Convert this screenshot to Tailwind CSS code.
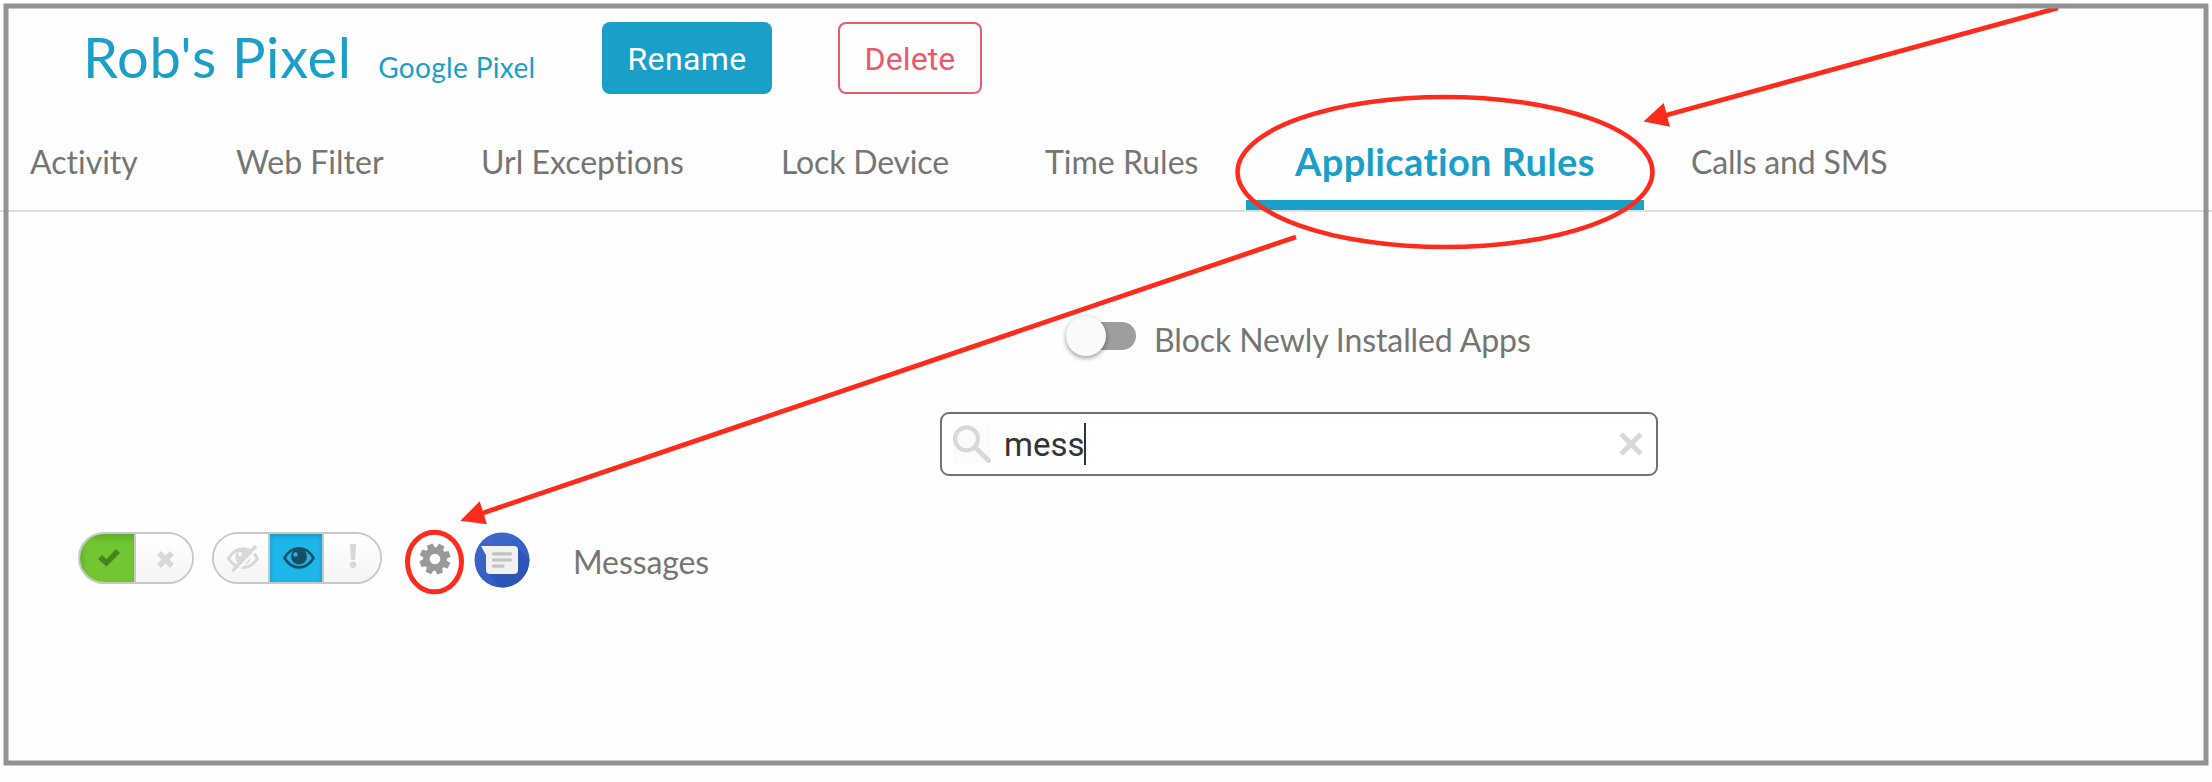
<!DOCTYPE html>
<html lang="en">
<head>
<meta charset="utf-8">
<title>Rob's Pixel - Application Rules</title>
<script src="https://cdn.jsdelivr.net/npm/@tailwindcss/browser@4"></script>
</head>
<body class="relative h-[782px] w-[2212px] overflow-hidden bg-[#fefefe] font-[Lato,sans-serif] text-[32px] text-[#757575] [font-variant-ligatures:none]">
<header class="flex h-[94px] items-end whitespace-nowrap pl-[83px] text-[#1a9fc9]">
  <div class="flex h-[72px] w-[519px] items-baseline">
    <h1 class="text-[56px] leading-[69px] tracking-[0.7px]">Rob's Pixel</h1>
    <span class="ml-[26.5px] text-[28px] leading-none tracking-[0.33px]">Google Pixel</span>
  </div>
  <button class="h-[72px] w-[170px] rounded-lg bg-[#1a9fc9] pt-[2px] font-[Roboto,sans-serif] tracking-[0.4px] text-white">Rename</button>
  <button class="ml-[66px] h-[72px] w-[144px] rounded-lg border-2 border-[#ea5a6f] pt-[2px] font-[Roboto,sans-serif] tracking-[0.1px] text-[#ea5a6f]">Delete</button>
</header>
<nav class="flex h-[118px] border-b-2 border-[#dedede] whitespace-nowrap">
  <ul class="-ml-[18px] flex h-[116px] leading-[40px]">
    <li class="w-[206px] pt-[48px] pl-12">Activity</li>
    <li class="w-[245px] pt-[48px] pl-12">Web Filter</li>
    <li class="w-[300px] pt-[48px] pl-12">Url Exceptions</li>
    <li class="w-[263px] pt-[48px] pl-12 tracking-[-0.18px]">Lock Device</li>
    <li class="w-[250px] pt-[48px] pl-[49px]">Time Rules</li>
    <li class="w-[398px] border-b-10 border-[#1a9fc9] pt-[47px] pl-[49px] text-[38px] font-bold tracking-[0.35px] text-[#1a9fc9]">Application Rules</li>
    <li class="pt-[48px] pl-[47px] tracking-[-0.18px]">Calls and SMS</li>
  </ul>
</nav>
<main>
  <div class="mt-[104px] flex h-[40px] items-center pl-[1066px]">
    <div class="flex h-[40px] w-[70px] items-center">
      <div class="z-10 size-[40px] shrink-0 rounded-full bg-[#fafafa] shadow-[0_2px_5px_rgba(0,0,0,0.4)]"></div>
      <div class="-ml-[38px] h-[28px] w-[68px] shrink-0 rounded-full bg-[#9e9e9e]"></div>
    </div>
    <span class="ml-[18px] pt-[8px] leading-[40px] tracking-[-0.1px]">Block Newly Installed Apps</span>
  </div>
  <div class="mt-[56px] ml-[940px] flex h-[64px] w-[718px] items-center rounded-[9px] border-2 border-[#75706b] bg-white pr-[13px] pl-[11px] font-[Roboto,sans-serif] text-[#333]">
    <svg class="size-[38px] bg-[#fbfbfb]" viewBox="0 0 38 38" fill="none" stroke="#d8d8d8"><circle cx="13.5" cy="13.8" r="11.5" stroke-width="4.2"/><path d="M22 22.300L35.500 35.500" stroke-width="5" stroke-linecap="round"/></svg>
    <span class="ml-[13px] w-[80px] pt-px text-[33px] leading-[48px]">mess</span>
    <span class="h-[42px] w-[2px] bg-[#333]"></span>
    <svg class="ml-auto size-[24px]" viewBox="0 0 24 24" stroke="#d8d8d8" stroke-width="5"><path d="M2 2L22 22M22 2L2 22"/></svg>
  </div>
  <div class="mt-[56px] flex h-[56px] items-start pl-[78px]">
    <div class="flex h-[52px] w-[116px] overflow-hidden rounded-full border-2 border-[#c8c8c8]">
      <div class="flex w-[56px] items-center justify-center border-r-2 border-[#c8c8c8] bg-[#71c631] shadow-[inset_2px_4px_6px_rgba(0,0,0,0.15)]">
        <svg class="ml-[3px] h-[18px] w-[22px]" viewBox="0 0 22 18"><path d="M0 10L4 6L8.5 10L18 0L22 4L8.5 17.5Z" fill="#458520"/></svg>
      </div>
      <div class="flex flex-1 items-center bg-linear-to-b from-white to-[#f5f5f5] pl-[21px]">
        <svg class="mt-[2px] size-[17px]" viewBox="0 0 17 17" stroke="#d8d8d8" stroke-width="5.5"><path d="M2 2L15 15M15 2L2 15"/></svg>
      </div>
    </div>
    <div class="ml-[18px] flex h-[52px] w-[170px] overflow-hidden rounded-full border-2 border-[#c8c8c8]">
      <div class="flex w-[56px] items-center border-r-2 border-[#c8c8c8] bg-linear-to-b from-white to-[#f5f5f5] pl-[13px]">
        <svg class="mt-[2px] h-[28px] w-[32px] shrink-0" viewBox="0 0 32 28" fill="none"><path d="M1.5 13.5C9 .5 23 .5 30.500 13.500C23 25.500 9 25.500 1.500 13.500Z" stroke="#d8d8d8" stroke-width="3"/><circle cx="16" cy="12" r="7.700" fill="#d8d8d8"/><circle cx="13" cy="9" r="2" fill="#fff"/><path d="M8 28L31 2" stroke="#fbfbfb" stroke-width="3"/><path d="M6.500 25L28 2" stroke="#d8d8d8" stroke-width="3.600" stroke-linecap="round"/></svg>
      </div>
      <div class="flex w-[54px] items-center border-r-2 border-[#c8c8c8] bg-[#1eb5e8] pl-[12px] shadow-[inset_0_2px_4px_rgba(0,0,0,0.18)]">
        <svg class="h-[28px] w-[34px] shrink-0" viewBox="0 0 34 28" fill="none"><path d="M2.500 14C10 1 24 1 31.500 14C24 26.500 10 26.500 2.500 14Z" stroke="#174e66" stroke-width="2.600"/><circle cx="17" cy="12.500" r="8" fill="#174e66"/><circle cx="13.500" cy="10.500" r="2.200" fill="#1eb5e8"/></svg>
      </div>
      <div class="flex flex-1 items-center bg-linear-to-b from-white to-[#f5f5f5] pl-[25px]">
        <svg class="-mt-[4px] h-[24px] w-[8px]" viewBox="0 0 8 24" fill="#d8d8d8"><path d="M.8 0H7.200L6 16H2Z"/><circle cx="4" cy="20.800" r="3.200"/></svg>
      </div>
    </div>
    <svg class="mt-[11px] ml-[37px] size-[32px]" viewBox="-16 -16 32 32" fill="#999"><g transform="rotate(3)"><path id="tooth" d="M-4-9L-3-15.500H3L4-9V9L3 15.500H-3L-4 9Z" transform="rotate(22.500)"/><use href="#tooth" transform="rotate(45)"/><use href="#tooth" transform="rotate(90)"/><use href="#tooth" transform="rotate(135)"/><circle r="11.800"/></g><circle r="5.300" fill="#fefefe"/></svg>
    <svg class="ml-[23px] size-[56px]" viewBox="0 0 56 56"><defs><linearGradient id="blue" x2=".6" y2="1"><stop stop-color="#4269cb"/><stop offset="1" stop-color="#2f5bc4"/></linearGradient><clipPath id="disc"><circle cx="28" cy="28" r="27.500"/></clipPath></defs><circle cx="28" cy="28" r="27.500" fill="url(#blue)"/><path clip-path="url(#disc)" d="M43 15L60 32V60H30L13 40Z" fill="#2b51ac" opacity=".65"/><path d="M7 14H40Q44 14 44 18V38Q44 42 40 42H16Q12 42 12 38V23Z" fill="#f1f1f1"/><path d="M19.500 21.800H36.500M19.500 28H36.500M19.500 34.200H29" stroke="#c2c2c2" stroke-width="3.200" stroke-linecap="round"/></svg>
    <span class="ml-[43px] pt-[10px] leading-[40px] tracking-[-0.1px]">Messages</span>
  </div>
</main>
<svg class="pointer-events-none absolute inset-0 z-20" width="2212" height="782" viewBox="0 0 2212 782" fill="none">
  <g stroke="#ff2b1c">
    <ellipse cx="1445" cy="172" rx="207.500" ry="75" stroke-width="4.500"/>
    <ellipse cx="434.500" cy="562" rx="27" ry="29.800" stroke-width="5"/>
    <path d="M2058 8L1665 115.500M1296 237L483 513" stroke-width="4.800"/>
  </g>
  <path d="M1643.500 121.500L1663.700 103L1670 126.700ZM460.300 520.700L479.700 501.300L487 524.300Z" fill="#ff2b1c"/>
  <rect x="6" y="6" width="2200" height="757" stroke="#929292" stroke-width="5"/>
</svg>
</body>
</html>
